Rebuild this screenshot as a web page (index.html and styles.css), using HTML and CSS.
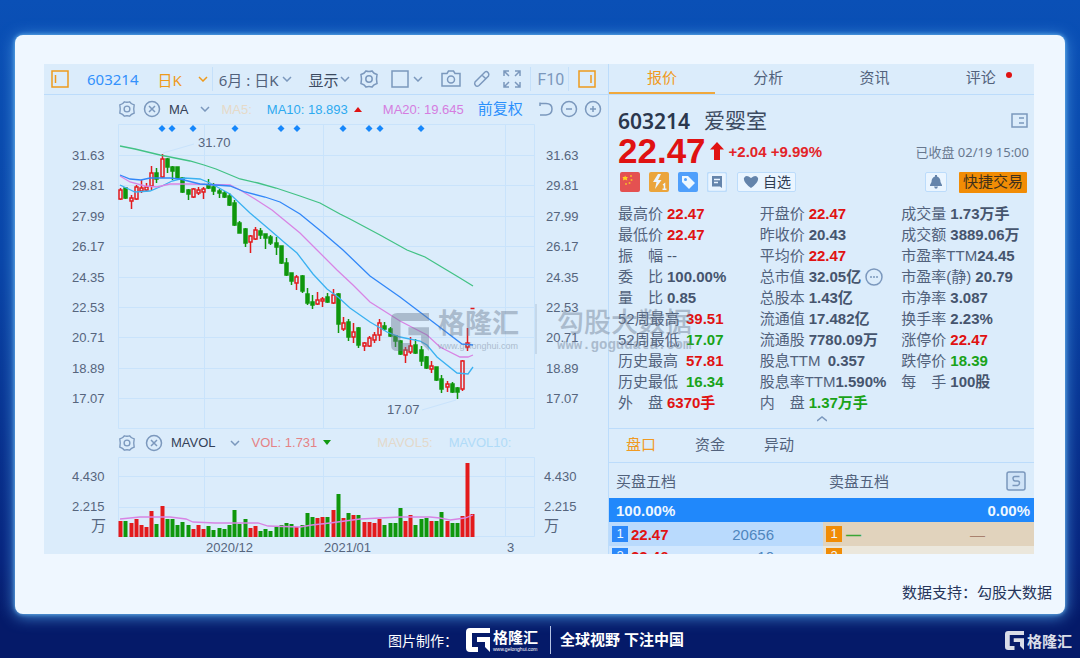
FILE: index.html
```html
<!DOCTYPE html>
<html lang="zh-CN">
<head>
<meta charset="utf-8">
<title>603214 爱婴室</title>
<link rel="stylesheet" href="styles.css">
</head>
<body>
<svg class="defs" aria-hidden="true">
  <symbol id="chev" viewBox="0 0 10 6"><path d="M1 1l4 4 4-4"/></symbol>
  <symbol id="gear" viewBox="0 0 20 20"><path d="M7 2Q10 3 13 2Q14.500 4.500 18 5.500Q17 10 18 14.500Q14.500 15.500 13 18Q10 17 7 18Q5.500 15.500 2 14.500Q3 10 2 5.500Q5.500 4.500 7 2Z"/><circle cx="10" cy="10" r="3.200"/></symbol>
  <symbol id="close" viewBox="0 0 18 18"><circle cx="9" cy="9" r="7.500"/><path d="M6 6l6 6M12 6l-6 6"/></symbol>
  <symbol id="logo" viewBox="0 0 24 24"><path d="M4 0H24V5H6V19H12V24H4Q0 24 0 20V4Q0 0 4 0Z"/><path d="M11 9H24V24L19 19V14H11Z"/></symbol>
</svg>
<main class="card">
  <div class="terminal">
    <section class="left">
      <div class="toolbar">
        <button class="orange" aria-label="左侧栏"><svg width="18" height="18" viewBox="0 0 18 18"><rect x="1" y="1" width="16" height="16"/><path d="M4.500 5v8"/></svg></button>
        <span class="code">603214</span>
        <button class="orange period">日K<svg class="i-chev"><use href="#chev"/></svg></button>
        <i class="sep"></i>
        <button class="mid">6月 : 日K<svg class="i-chev"><use href="#chev"/></svg></button>
        <button class="mid show">显示<svg class="i-chev"><use href="#chev"/></svg></button>
        <button class="gap-s" aria-label="设置"><svg width="20" height="20"><use href="#gear"/></svg></button>
        <button class="mid gap-s" aria-label="画框"><svg width="18" height="18" viewBox="0 0 18 18"><rect x="1" y="1" width="16" height="16"/></svg><svg class="i-chev"><use href="#chev"/></svg></button>
        <button class="gap-l" aria-label="截图"><svg width="20" height="18" viewBox="0 0 20 18"><path d="M1 3.500H6L7.500 1H12.500L14 3.500H19V16H1Z"/><circle cx="10" cy="9.500" r="3.500"/></svg></button>
        <button class="gap-m" aria-label="画线"><svg width="18" height="18" viewBox="0 0 18 18"><path d="M2 12L12 2Q13.500 1 15 2.500T15.500 6L6 15.500Q4 17 2.500 15.500T2 12ZM9 5l4 4"/></svg></button>
        <button class="gap-m" aria-label="全屏"><svg width="18" height="18" viewBox="0 0 18 18"><path d="M1 6V1H6M1 1L6 6M12 1H17V6M17 1L12 6M1 12V17H6M1 17L6 12M17 12V17H12M17 17L12 12"/></svg></button>
        <i class="sep gap-s"></i>
        <button class="f10">F10</button>
        <i class="sep"></i>
        <button class="orange last" aria-label="右侧栏"><svg width="18" height="18" viewBox="0 0 18 18"><rect x="1" y="1" width="16" height="16"/><path d="M13 5v8"/></svg></button>
      </div>
      <div class="indicator">
        <svg width="18" height="18"><use href="#gear"/></svg>
        <svg class="x" width="18" height="18"><use href="#close"/></svg>
        <b>MA</b><svg class="i-chev"><use href="#chev"/></svg>
        <span class="ma5">MA5:</span><span class="ma10">MA10: 18.893</span><i class="up"></i>
        <span class="ma20">MA20: 19.645</span><a class="adjust" href="#">前复权</a>
        <span class="tools">
          <svg width="16" height="18" viewBox="0 0 16 18"><path d="M2 6V2.500M2 3.500H8Q14 3.500 14 9T8 15H2"/></svg>
          <svg width="18" height="18" viewBox="0 0 18 18"><circle cx="9" cy="9" r="7.500"/><path d="M6 9h6"/></svg>
          <svg width="18" height="18" viewBox="0 0 18 18"><circle cx="9" cy="9" r="7.500"/><path d="M6 9h6M9 6v6"/></svg>
        </span>
      </div>
      <svg class="chart" id="price" viewBox="44 123 564 308"></svg>
      <div class="indicator vol">
        <svg width="18" height="18"><use href="#gear"/></svg>
        <svg class="x" width="18" height="18"><use href="#close"/></svg>
        <b>MAVOL</b><svg class="i-chev"><use href="#chev"/></svg>
        <span class="volume">VOL: 1.731</span><i class="down"></i>
        <span class="mv5">MAVOL5:</span><span class="mv10">MAVOL10:</span>
      </div>
      <svg class="chart" id="volume" viewBox="44 454 564 100"></svg>
    </section>
    <section class="right">
      <nav class="tabs"><a class="on" href="#">报价</a><a href="#">分析</a><a href="#">资讯</a><a class="dot" href="#">评论</a></nav>
      <div class="quote">
        <div class="line name"><b>603214</b><h1>爱婴室</h1>
          <svg class="end" width="18" height="16" viewBox="0 0 18 16"><rect x="1" y="1" width="15" height="13"/><path d="M8 5h5M8 10h5"/></svg></div>
        <div class="line price"><strong>22.47</strong>
          <svg width="14" height="18" viewBox="0 0 14 18"><path d="M7 0L14 7.500H10V18H4V7.500H0Z"/></svg>
          <span>+2.04 +9.99%</span><time class="end">已收盘 02/19 15:00</time></div>
        <div class="line badges">
          <svg width="20" height="20" viewBox="0 0 20 20"><rect width="20" height="20" rx="2" fill="#e45151"/><path d="M5 3.500l1 1.500 2 0-1.200 1.500.500 2L5 7.500 3 8.500l.300-2L2.500 5H4.500Z" fill="#ffd31c"/><g fill="#f7b52b"><circle cx="11" cy="4" r="1"/><circle cx="11.500" cy="8" r="1"/><circle cx="9.500" cy="11" r="1"/><circle cx="6" cy="12" r="1"/></g></svg>
          <svg width="20" height="20" viewBox="0 0 20 20"><rect width="20" height="20" rx="2" fill="#eba53c"/><path d="M9 2L4 10h3.500L6 17l6.500-9H9L12 2Z" fill="#eaf5ff"/><path d="M14 13l1.500-1v5M13.500 17.300h4" stroke="#eaf5ff" fill="none"/></svg>
          <svg width="20" height="20" viewBox="0 0 20 20"><rect width="20" height="20" rx="2" fill="#4f9ffb"/><path d="M4 4H10L17 11L11 17L4 10Z" fill="#eef8ff"/><circle cx="7.500" cy="7.500" r="1.500" fill="#4f9ffb"/></svg>
          <svg width="20" height="20" viewBox="0 0 20 20"><rect x=".500" y=".500" width="19" height="19" rx="2" fill="#e9f4ff" stroke="#bcdcfb"/><path d="M5 4H15V16L13 14.500H5Z" fill="#6484ab"/><path d="M7 7.500h6M7 10.500h4" stroke="#e9f4ff"/></svg>
          <button class="fav"><svg width="16" height="14" viewBox="0 0 16 14"><path d="M8 13Q0 7 1 3Q3-1 8 3Q13-1 15 3Q16 7 8 13Z"/></svg>自选</button>
          <button class="bell end" aria-label="提醒"><svg width="14" height="14" viewBox="0 0 14 14"><path d="M6 0H8V1.500Q11.500 2.500 11.500 7L13 10V11H1V10L2.500 7Q2.500 2.500 6 1.500ZM5 11.500H9L8 13.500H6Z"/></svg></button>
          <button class="trade">快捷交易</button>
        </div>
      </div>
      <div class="stats">
        <dl>
          <div><dt>最高价</dt><dd class="r">22.47</dd></div>
          <div><dt>最低价</dt><dd class="r">22.47</dd></div>
          <div><dt>振 幅</dt><dd class="plain">--</dd></div>
          <div><dt>委 比</dt><dd>100.00%</dd></div>
          <div><dt>量 比</dt><dd>0.85</dd></div>
          <div class="wide"><dt>52周最高</dt><dd class="r">39.51</dd></div>
          <div class="wide"><dt>52周最低</dt><dd class="g">17.07</dd></div>
          <div class="wide"><dt>历史最高</dt><dd class="r">57.81</dd></div>
          <div class="wide"><dt>历史最低</dt><dd class="g">16.34</dd></div>
          <div><dt>外 盘</dt><dd class="r">6370手</dd></div>
        </dl>
        <dl>
          <div><dt>开盘价</dt><dd class="r">22.47</dd></div>
          <div><dt>昨收价</dt><dd>20.43</dd></div>
          <div><dt>平均价</dt><dd class="r">22.47</dd></div>
          <div><dt>总市值</dt><dd>32.05亿</dd><svg width="18" height="18" viewBox="0 0 18 18"><circle cx="9" cy="9" r="8"/><path d="M5 9h2M8 9h2M11 9h2"/></svg></div>
          <div><dt>总股本</dt><dd>1.43亿</dd></div>
          <div><dt>流通值</dt><dd>17.482亿</dd></div>
          <div><dt>流通股</dt><dd>7780.09万</dd></div>
          <div class="wide"><dt>股息TTM</dt><dd>0.357</dd></div>
          <div class="tight"><dt>股息率TTM</dt><dd>1.590%</dd></div>
          <div><dt>内 盘</dt><dd class="g">1.37万手</dd></div>
        </dl>
        <dl>
          <div><dt>成交量</dt><dd>1.73万手</dd></div>
          <div><dt>成交额</dt><dd>3889.06万</dd></div>
          <div class="tight"><dt>市盈率TTM</dt><dd>24.45</dd></div>
          <div><dt>市盈率(静)</dt><dd>20.79</dd></div>
          <div><dt>市净率</dt><dd>3.087</dd></div>
          <div><dt>换手率</dt><dd>2.23%</dd></div>
          <div><dt>涨停价</dt><dd class="r">22.47</dd></div>
          <div><dt>跌停价</dt><dd class="g">18.39</dd></div>
          <div><dt>每 手</dt><dd>100股</dd></div>
        </dl>
      </div>
      <button class="fold" aria-label="收起"><svg class="i-chev" viewBox="0 0 10 6"><path d="M0 5l5-4 5 4"/></svg></button>
      <nav class="subtabs"><a class="on" href="#">盘口</a><a href="#">资金</a><a href="#">异动</a></nav>
      <div class="depth-head"><span>买盘五档</span><span>卖盘五档</span>
        <svg width="20" height="20" viewBox="0 0 20 20"><rect x="1" y="1" width="18" height="18" rx="2" fill="#cfe3f7"/><path d="M13.500 5.500H9Q7 5.500 7 7.500T9 10H11.500Q13.500 10 13.500 12T11.500 14.500H6.500"/></svg></div>
      <div class="ratio"><b>100.00%</b><b>0.00%</b></div>
      <div class="depth">
        <div class="bid"><em>1</em><b>22.47</b><span>20656</span></div>
        <div class="ask"><em>1</em><b>—</b><span>—</span></div>
        <div class="bid next"><em>2</em><b>22.46</b><span>10</span></div>
        <div class="ask next"><em>2</em></div>
      </div>
    </section>
    <div class="watermark">
      <svg width="38" height="38"><use href="#logo"/></svg>
      <div class="brand"><b>格隆汇</b><small>www.gelonghui.com</small></div>
      <div class="data"><b>勾股大数据</b><small>www.gogudata.com</small></div>
    </div>
  </div>
  <p class="support">数据支持：勾股大数据</p>
</main>
<footer class="footer">
  <div class="credit"><span>图片制作：</span>
    <svg class="mark" width="24" height="24"><use href="#logo"/></svg>
    <div class="brand"><b>格隆汇</b><small>www.gelonghui.com</small></div>
    <strong>全球视野 下注中国</strong></div>
  <div class="corner"><svg class="mark" width="19" height="19"><use href="#logo"/></svg><b>格隆汇</b></div>
</footer>
<script src="chart.js"></script>
</body>
</html>
```
FILE: styles.css
```css
* { box-sizing: border-box; }
body {
  margin: 0;
  min-height: 100vh;
  display: flex;
  flex-direction: column;
  background: linear-gradient(#0a50b6 0%, #0843a6 40%, #06227c 85%, #051a69 94%);
  font-family: "Liberation Sans", "Noto Sans CJK SC", sans-serif;
  font-size: 15px;
  color: #52627c;
}
a { color: inherit; text-decoration: none; }
button { border: 0; padding: 0; background: none; font: inherit; color: inherit; display: flex; align-items: center; flex: none; white-space: nowrap; }
svg { fill: none; stroke: #7b98bd; stroke-width: 1.5; flex: none; display: block; }
dl, dd, p, h1 { margin: 0; }
.defs { position: absolute; width: 0; height: 0; }
.i-chev { width: 10px; height: 6px; }
.card {
  margin: 35px 15px 0;
  padding: 29px 31px 0 29px;
  background: #eff7ff;
  border-radius: 8px;
  box-shadow: 0 0 4px #6fbbf0, 0 2px 16px #4b9be2;
}
.terminal { position: relative; display: grid; grid-template-columns: 564fr 426fr; background: #dbecfb; }
.left, .right { min-width: 0; }
.right { border-left: 1px solid #bcdcfb; }

.toolbar { display: flex; align-items: center; height: 31px; padding: 0 12px 0 7px; border-bottom: 1px solid #bcdcfb; }
.toolbar .orange { color: #ee9a1c; }
.orange svg { stroke: #ee9a1c; }
.code { margin-left: 18px; color: #3391fb; font-family: "Noto Sans", sans-serif; }
.toolbar .period, .toolbar .mid { font-family: "Noto Sans", "Noto Sans CJK SC", sans-serif; }
.period { margin-left: 19px; gap: 16px; }
.mid { gap: 4px; }
.show { margin-left: 16px; gap: 2px; color: #3c4a60; }
.sep { flex: none; width: 1px; height: 24px; margin: 0 6px 0 4px; background: #c5e0fa; }
.gap-s { margin-left: 9px; }
.toolbar .mid.gap-s { margin-left: 12px; }
.gap-m { margin-left: 12px; }
.gap-l { margin-left: 18px; }
.f10 { color: #7b98bd; font-size: 16px; font-family: Roboto, sans-serif; font-weight: 400; }
.last { margin-left: auto; }

.indicator { display: flex; align-items: center; height: 28px; padding: 0 6px 0 74px; font-size: 13px; }
.indicator .x { margin: 0 8px 0 7px; }
.indicator b { font-weight: 400; color: #344157; margin-right: 11px; }
.ma5 { margin-left: 12px; color: #e6dac8; }
.ma10 { margin-left: 15px; color: #2daaf0; }
.ma20 { margin-left: 21px; color: #d57de0; }
.adjust { margin-left: 14px; color: #2b90fb; font-size: 15px; line-height: 20px; }
.up, .down { margin-left: 6px; border: 4px solid transparent; border-top: 0; border-bottom: 5px solid #e01212; }
.down { border-bottom: 0; border-top: 5px solid #129a12; }
.tools { margin-left: auto; display: flex; gap: 6px; }
.indicator.vol { height: 23px; }
.vol .x { margin: 0 8px 0 9px; }
.vol b { margin-right: 14px; }
.volume { margin-left: 12px; color: #e58285; }
.mv5 { margin-left: 46px; color: #e3d9cb; }
.mv10 { margin-left: 16px; color: #b0dbf8; }

.chart { width: 100%; height: auto; }
.chart text { fill: #56657d; stroke: none; font-size: 13px; }
.chart .unit { font-size: 15px; }
.grid { stroke: #c9e3fb; stroke-width: 1; }
.red { stroke: #e31a1c; }
.green { stroke: #0f970c; fill: #0f970c; }
.bar-red { fill: #e31a1c; stroke: none; }
.bar-green { fill: #0f970c; stroke: none; }
.gem { fill: #1687fb; stroke: none; }
.curve { stroke-width: 1.3; }
.curve-60 { stroke: #42c285; }
.curve-30 { stroke: #3187f8; }
.curve-20 { stroke: #d884e4; }
.curve-10 { stroke: #3ab1f1; }

.tabs { display: grid; grid-template-columns: repeat(4, 1fr); height: 31px; border-bottom: 1px solid #bcdcfb; line-height: 28px; text-align: center; }
.tabs .on { color: #f09a22; border-bottom: 2px solid #f0a83c; }
.dot { position: relative; }
.dot::after { content: ""; position: absolute; left: calc(50% + 25px); top: 8px; width: 6px; height: 6px; border-radius: 50%; background: #e01212; }
.quote { padding: 11px 5px 5px 9px; }
.line { display: flex; align-items: center; height: 30px; }
.line .end { margin-left: auto; }
.name b { font: 600 21px "Noto Sans", sans-serif; color: #2b374d; }
.name h1 { margin-left: 14px; font-size: 21px; line-height: 24px; font-weight: 400; color: #3c4a60; }
.price strong { font-size: 35px; line-height: 30px; color: #e01212; }
.price svg { margin: 0 5px 0 4px; fill: #e01212; stroke: none; }
.price span { font-weight: 700; color: #e32428; font-size: 15px; }
.price time { font-family: "Noto Sans", "Noto Sans CJK SC", sans-serif; font-size: 13px; color: #68788f; }
.badges { height: 32px; gap: 9px; padding: 0 2px; }
.badges svg { stroke: none; }
.fav, .bell { height: 20px; border: 1px solid #bcdcfb; border-radius: 2px; background: #eaf5ff; }
.fav { padding: 0 4px 0 5px; gap: 4px; font-size: 14px; line-height: 18px; color: #2f3c52; margin-left: 1px; }
.fav svg, .bell svg { fill: #6484ab; }
.bell { padding: 0 3px; }
.trade { height: 21px; padding: 0 4px; border-radius: 1px; background: #f18c05; color: #40301b; margin-left: 3px; line-height: 20px; }
.stats { display: grid; grid-template-columns: 142fr 142fr 133fr; padding-left: 9px; line-height: 21px; white-space: nowrap; }
.stats div { display: flex; align-items: center; height: 21px; gap: 4px; }
.stats dt { min-width: 45px; text-align-last: justify; }
.stats .wide dt { min-width: 64px; text-align-last: left; }
.stats .tight { gap: 0; }
.stats dd { font-weight: 700; color: #46556e; }
.stats .plain { font-weight: 400; }
.stats .r { color: #e01212; }
.stats .g { color: #19a319; }
.fold { width: 100%; height: 16px; justify-content: center; align-items: flex-start; border-bottom: 1px solid #bcdcfb; padding-top: 3px; }
.subtabs { display: flex; gap: 39px; height: 34px; padding-left: 17px; line-height: 32px; border-bottom: 1px solid #bcdcfb; }
.subtabs .on { color: #f09a22; }
.depth-head { display: grid; grid-template-columns: 213fr 177fr 20px; align-items: center; height: 35px; padding: 0 8px 0 7px; }
.ratio { display: flex; justify-content: space-between; align-items: center; height: 24px; padding: 0 4px 0 7px; background: #2088fb; color: #eef7ff; }
.depth { display: grid; grid-template-columns: 214fr 211fr; grid-template-rows: 24px 20px; height: 32px; overflow: hidden; }
.depth div { display: flex; align-items: center; padding: 0 49px 0 3px; background: #b9dafd; }
.depth em { width: 16px; height: 16px; margin-right: 3px; background: #2b88fa; color: #eef7ff; font-style: normal; font-size: 13px; line-height: 16px; text-align: center; }
.depth b { color: #e01212; }
.depth span { margin-left: auto; color: #4f86bd; }
.depth .ask { background: #e1d3bd; }
.depth .ask em { background: #f18c05; margin-right: 4px; }
.depth .ask b { color: #3aa635; }
.depth .ask span { color: #a8816e; }
.depth .bid.next { background: #d1e7fe; }
.depth .ask.next { background: #ebe7dc; }

.watermark { position: absolute; left: 347px; top: 240px; display: flex; align-items: center; color: #68788f; opacity: .42; pointer-events: none; }
.watermark svg { fill: #68788f; stroke: none; margin-top: 5px; }
.watermark div { display: flex; flex-direction: column; }
.watermark b { font-size: 27px; line-height: 34px; }
.watermark small { font-size: 9px; line-height: 10px; }
.watermark .brand { margin-left: 9px; padding-right: 16px; }
.watermark .data { padding: 3px 0 3px 20px; border-left: 2px solid #a9bdd5; }
.watermark .data b { font-weight: 500; line-height: 32px; }
.watermark .data small { font: 700 14px/12px "Liberation Mono", monospace; }

.support { padding: 28px 0 10px; margin-right: -18px; text-align: right; line-height: 22px; color: #26355a; }
.footer { display: grid; grid-template-columns: 1fr auto 1fr; align-items: center; height: 44px; padding: 8px 8px 0 0; color: #fff; }
.credit { grid-column: 2; display: flex; align-items: center; font-size: 14px; }
.mark { fill: #fff; stroke: none; }
.credit .mark { margin-left: 8px; }
.credit .brand { display: flex; flex-direction: column; margin-left: 3px; }
.credit .brand b { font-size: 15px; line-height: 18px; }
.credit small { font-size: 5px; line-height: 5px; }
.credit strong { margin-left: 12px; padding-left: 9px; border-left: 1px solid #b6c3e4; font-size: 15px; line-height: 28px; }
.corner { display: flex; align-items: center; justify-content: flex-end; gap: 3px; opacity: .85; }
```
FILE: chart.js
```js
// Each candle: high, body top, body bottom, low, rising flag, volume bar height
const candles = [
  [188,190,199,200,1,16],[188,188,198,199,0,16],[195,198,201,209,1,14],[185,187,199,200,1,18],
  [180,188,191,193,1,12],[183,187,190,192,1,10],[166,173,186,190,1,26],[168,173,179,183,0,13],
  [154,159,177,178,1,31],[158,159,167,173,0,18],[166,167,171,180,0,18],[167,167,178,179,0,12],
  [177,178,192,193,0,15],[189,190,194,200,0,12],[188,189,197,198,1,8],[187,190,193,195,1,12],
  [187,189,192,199,1,8],[179,185,188,189,0,11],[183,187,191,195,0,7],[189,191,193,198,0,9],
  [191,193,197,198,0,8],[193,196,205,206,0,12],[200,203,225,226,0,27],[221,223,233,233,0,13],
  [228,229,243,247,0,18],[235,236,242,253,1,9],[227,230,239,240,1,11],[228,231,235,239,0,6],
  [234,234,238,249,0,8],[235,237,243,245,0,6],[237,243,247,255,0,10],[246,246,263,264,0,12],
  [258,263,275,276,0,14],[273,273,281,285,0,13],[275,277,283,290,1,10],[275,276,291,293,0,12],
  [288,294,303,305,0,24],[295,302,305,309,0,20],[292,300,304,305,1,19],[297,299,301,307,1,20],
  [293,297,302,303,0,20],[289,295,303,304,1,27],[293,294,324,333,0,43],[317,323,329,331,1,19],
  [319,322,337,341,0,24],[323,332,337,343,1,22],[327,328,345,348,0,22],[342,343,346,351,1,15],
  [336,338,346,347,1,15],[332,335,340,343,1,14],[319,323,335,341,1,18],[322,326,329,331,0,12],
  [327,329,336,337,0,14],[335,336,341,347,0,14],[340,341,354,355,0,29],[347,350,355,363,1,16],
  [337,346,352,354,1,22],[339,345,353,354,0,12],[346,350,361,366,0,18],[356,357,368,369,0,19],
  [361,366,369,373,1,16],[367,367,380,381,0,16],[375,379,389,393,0,25],[381,384,387,392,1,16],
  [382,384,392,393,0,14],[387,388,392,399,0,14],[360,361,389,391,1,21],[328,343,347,351,1,74],
  [308,308,308,308,1,23]
];
const first = 120.2, step = 5.18;
const x = i => Math.round(first + i * step) + 0.5;
const path = (cls, d) => `<path class="${cls}" d="${d}"/>`;
const label = (px, py, s, cls = '') => `<text class="${cls}" x="${px}" y="${py}">${s}</text>`;

let p = path('grid', 'M118.500 124.500H534.500V428.500H118.500ZM204.500 124V428M323.500 124V428M505.500 124V428');
['31.63','29.81','27.99','26.17','24.35','22.53','20.71','18.89','17.07'].forEach((s, i) => {
  const y = Math.round(155 + i * 30.4) + 0.5;
  p += path('grid', `M118 ${y}H534`) + label(72, y + 4, s) + label(546, y + 4, s);
});
[162,172,193,235,281,297,343,369,380,421].forEach(c => {
  p += path('gem', `M${c} 125L${c + 3.5} 128.500L${c} 132L${c - 3.5} 128.500Z`);
});
p += path('grid', 'M163 153L194 144M422 410L456 400');
p += label(198, 147, '31.70') + label(387, 414, '17.07');
candles.forEach(([h, t, b, l, up], i) => {
  const c = x(i);
  p += h === l
    ? path('red', `M${c - 2} ${h}.500H${c + 2}`)
    : path(up ? 'red' : 'green', `M${c} ${h}V${t}M${c} ${b}V${l}M${c - 1.5} ${t}H${c + 1.5}V${b}H${c - 1.5}Z`);
});
const curves = {
  60: '120,146 135,149 160,155 190,161 204,165 216,169 240,179 258,183 276,188 300,196 320,203 340,214 350,219 380,235 407,250 425,257 440,266 460,278 473,286',
  30: '120,175 130,179 141,180 150,178 170,178 180,179 200,184 230,186 245,192 265,197 280,202 300,214 322,232 343,250 370,276 400,297 433,322 462,344 473,345',
  20: '120,176 130,182 145,186 157,187 170,184 190,184 230,185 240,190 255,199 272,210 300,233 317,250 337,270 353,285 370,302 400,321 427,335 440,347 460,357 468,357 473,355',
  10: '120,185 135,192 150,191 162,186 172,181 184,178 200,179 210,183 230,194 250,213 270,230 285,243 297,253 313,274 327,289 338,297 350,308 370,322 387,332 400,337 420,341 427,345 437,357 457,373 468,374 473,367'
};
for (const k in curves) p += `<polyline class="curve curve-${k}" points="${curves[k]}"/>`;
document.getElementById('price').innerHTML = p;

let v = path('grid', 'M118.500 457.500H534.500V536.500H118.500ZM204.500 457V536M323.500 457V536M505.500 457V536M118 476.500H534M118 507.500H534');
[72, 544].forEach(px => {
  v += label(px, 481, '4.430') + label(px, 511, '2.215');
});
v += label(91, 531, '万', 'unit') + label(544, 531, '万', 'unit');
candles.forEach(([, , , , up, n], i) => {
  v += `<rect class="bar-${up ? 'red' : 'green'}" x="${x(i) - 2}" y="${537 - n}" width="4" height="${n}"/>`;
});
v += '<polyline class="curve curve-20" points="120,519 140,517 170,517 186,519 193,522 215,523 258,523 268,526 300,527 312,525 330,523 345,521 360,519 400,517 430,517 440,518 450,520 465,518 473,515"/>';
v += label(206, 552, '2020/12') + label(324, 552, '2021/01') + label(507, 552, '3');
document.getElementById('volume').innerHTML = v;
```
